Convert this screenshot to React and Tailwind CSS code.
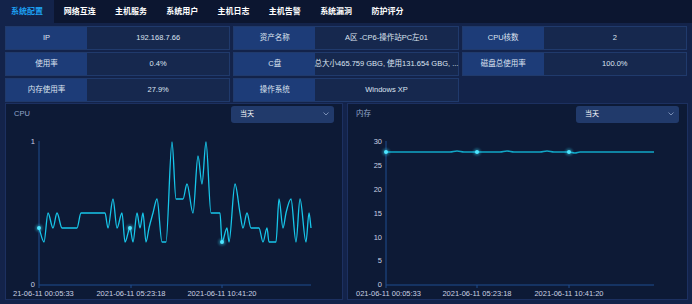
import React from 'react';

const font = "font-['Liberation_Sans','Noto_Sans_CJK_SC',sans-serif]";

const tabs = ['系统配置', '网络互连', '主机服务', '系统用户', '主机日志', '主机告警', '系统漏洞', '防护评分'];

const rows = [
  [['IP', '192.168.7.66'], ['资产名称', 'A区 -CP6-操作站PC左01'], ['CPU核数', '2']],
  [['使用率', '0.4%'], ['C盘', '总大小465.759 GBG, 使用131.654 GBG, ...'], ['磁盘总使用率', '100.0%']],
  [['内存使用率', '27.9%'], ['操作系统', 'Windows XP'], null],
];

const cpuPts = [
  [39, 228], [44, 242], [48, 213], [53, 228], [57, 213], [62, 228], [77, 228], [81, 213], [105, 213],
  [108, 228], [113, 199], [117, 228], [122, 213], [125, 242], [130, 228], [133, 242], [137, 213],
  [140, 228], [143, 213], [146, 242], [149, 228], [153, 213], [157, 199], [162, 242], [166, 242],
  [172, 142], [176, 199], [183, 199], [187, 184], [193, 213], [198, 156], [202, 184], [206, 142],
  [211, 213], [220, 213], [222, 242], [227, 228], [229, 242], [235, 184], [240, 213], [243, 228],
  [247, 213], [251, 228], [259, 228], [263, 242], [267, 228], [269, 242], [276, 242], [279, 199],
  [283, 228], [286, 213], [291, 199], [296, 242], [300, 199], [306, 242], [309, 213], [311, 228],
];

const memPts = [
  [386, 152], [420, 152], [450, 152], [457, 151], [464, 152], [477, 152], [500, 152], [507, 151],
  [514, 152], [540, 152], [547, 151], [554, 152], [569, 152], [575, 153], [580, 152], [654, 152],
];

// monotone-x cubic, so flat runs stay flat
function smooth(pts) {
  const n = pts.length;
  const m = [];
  for (let i = 0; i < n - 1; i++) {
    m.push((pts[i + 1][1] - pts[i][1]) / (pts[i + 1][0] - pts[i][0]));
  }
  const t = pts.map((p, i) => {
    if (i === 0) return m[0];
    if (i === n - 1) return m[n - 2];
    const m0 = m[i - 1];
    const m1 = m[i];
    if (m0 * m1 <= 0) return 0;
    const h0 = p[0] - pts[i - 1][0];
    const h1 = pts[i + 1][0] - p[0];
    const q = (m0 * h1 + m1 * h0) / (h0 + h1);
    return Math.sign(m0) * Math.min(Math.abs(m0), Math.abs(m1), 0.5 * Math.abs(q)) * 2;
  });
  let d = `M${pts[0][0]},${pts[0][1]}`;
  for (let i = 0; i < n - 1; i++) {
    const [x0, y0] = pts[i];
    const [x1, y1] = pts[i + 1];
    const dx = (x1 - x0) / 3;
    d += ` C${x0 + dx},${y0 + dx * t[i]} ${x1 - dx},${y1 - dx * t[i + 1]} ${x1},${y1}`;
  }
  return d;
}

function Dot({ x, y }) {
  return (
    <g>
      <circle cx={x} cy={y} r="3.6" fill="#38e1ff" opacity="0.35" filter="url(#glow)" />
      <circle cx={x} cy={y} r="2" fill="#4fe6ff" />
    </g>
  );
}

function Select() {
  return (
    <div className="flex items-center justify-between w-[103px] h-[17px] pl-[9px] pr-[5px] rounded-[3px] bg-[#213a6b] text-[7px] text-white">
      <span>当天</span>
      <svg width="6" height="4" viewBox="0 0 6 4">
        <path d="M0.5 0.5 L3 3 L5.5 0.5" fill="none" stroke="#8fa2c6" strokeWidth="0.8" />
      </svg>
    </div>
  );
}

function Panel({ title, className, children }) {
  return (
    <div className={`flex flex-col border border-[#1c3060] bg-[#0d1a36] ${className}`}>
      <div className="flex items-center justify-between h-[20px] pl-[8px] pr-[8px]">
        <span className="text-[7.5px] text-[#93a6cb]">{title}</span>
        <Select />
      </div>
      {children}
    </div>
  );
}

const axis = '#1f4c8f';
const label = '#c9d1e3';

function CpuChart() {
  return (
    <svg width="336" height="175" viewBox="6 124 336 175" className="block">
      <defs>
        <filter id="glow" x="-2" y="-2" width="5" height="5">
          <feGaussianBlur stdDeviation="1.2" />
        </filter>
      </defs>
      <line x1="39" y1="141" x2="39" y2="285" stroke={axis} strokeWidth="1" />
      <line x1="39" y1="285" x2="311" y2="285" stroke={axis} strokeWidth="1" />
      {[39, 131, 222].map((x) => (
        <line key={x} x1={x} y1="285" x2={x} y2="288" stroke={axis} strokeWidth="1" />
      ))}
      <g fill={label} fontSize="7.5" fontFamily="Liberation Sans, sans-serif">
        <text x="35" y="143.5" textAnchor="end">1</text>
        <text x="35" y="286.5" textAnchor="end">0</text>
        <text x="13" y="296">21-06-11 00:05:33</text>
        <text x="131" y="296" textAnchor="middle">2021-06-11 05:23:18</text>
        <text x="222" y="296" textAnchor="middle">2021-06-11 10:41:20</text>
      </g>
      <path d={smooth(cpuPts)} fill="none" stroke="#17c6ea" strokeWidth="1.3" />
      <Dot x={39} y={228} />
      <Dot x={130} y={228} />
      <Dot x={222} y={242} />
    </svg>
  );
}

function MemChart() {
  const ticks = [[30, 141], [25, 165], [20, 189], [15, 213], [10, 237], [5, 260], [0, 284]];
  return (
    <svg width="339" height="175" viewBox="348 124 339 175" className="block">
      <line x1="386" y1="141" x2="386" y2="285" stroke={axis} strokeWidth="1" />
      <line x1="386" y1="285" x2="654" y2="285" stroke={axis} strokeWidth="1" />
      {[386, 477, 569].map((x) => (
        <line key={x} x1={x} y1="285" x2={x} y2="288" stroke={axis} strokeWidth="1" />
      ))}
      <g fill={label} fontSize="7.5" fontFamily="Liberation Sans, sans-serif">
        {ticks.map(([v, y]) => (
          <text key={v} x="382" y={y + 2.6} textAnchor="end">{v}</text>
        ))}
        <text x="356" y="296">021-06-11 00:05:33</text>
        <text x="477" y="296" textAnchor="middle">2021-06-11 05:23:18</text>
        <text x="569" y="296" textAnchor="middle">2021-06-11 10:41:20</text>
      </g>
      <path d={smooth(memPts)} fill="none" stroke="#11a6c6" strokeWidth="1.6" />
      <Dot x={386} y={152} />
      <Dot x={477} y={152} />
      <Dot x={569} y={152} />
    </svg>
  );
}

export default function App() {
  return (
    <div className={`w-[692px] h-[304px] overflow-hidden bg-[#13234a] flex flex-col ${font}`}>
      <div className="flex h-[23px] bg-[#0c1630] shrink-0">
        {tabs.map((t, i) => (
          <div
            key={t}
            className={
              i === 0
                ? 'w-[54px] flex items-center justify-center bg-[#13234a] text-[8px] font-bold text-[#1d9ff0]'
                : 'w-[51.3px] flex items-center justify-center text-[8px] font-bold text-white'
            }
          >
            {t}
          </div>
        ))}
      </div>

      <div className="flex flex-col gap-[2px] px-[5px] pt-[3px]">
        {rows.map((row, ri) => (
          <div key={ri} className="grid grid-cols-3 gap-x-[3px] h-[24px]">
            {row.map((cell, ci) =>
              cell ? (
                <div key={ci} className="flex border border-[#203a6c] text-[7.5px] text-[#dde4f1]">
                  <div className="w-[81px] shrink-0 flex items-center justify-center bg-[#1d3c78]">{cell[0]}</div>
                  <div className="flex-1 min-w-0 flex items-center justify-center bg-[#16284e]">
                    <span className="whitespace-nowrap">{cell[1]}</span>
                  </div>
                </div>
              ) : (
                <div key={ci} />
              )
            )}
          </div>
        ))}
      </div>

      <div className="flex gap-[4px] px-[5px] mt-[1px]">
        <Panel title="CPU" className="w-[338px]">
          <CpuChart />
        </Panel>
        <Panel title="内存" className="w-[341px]">
          <MemChart />
        </Panel>
      </div>
    </div>
  );
}
